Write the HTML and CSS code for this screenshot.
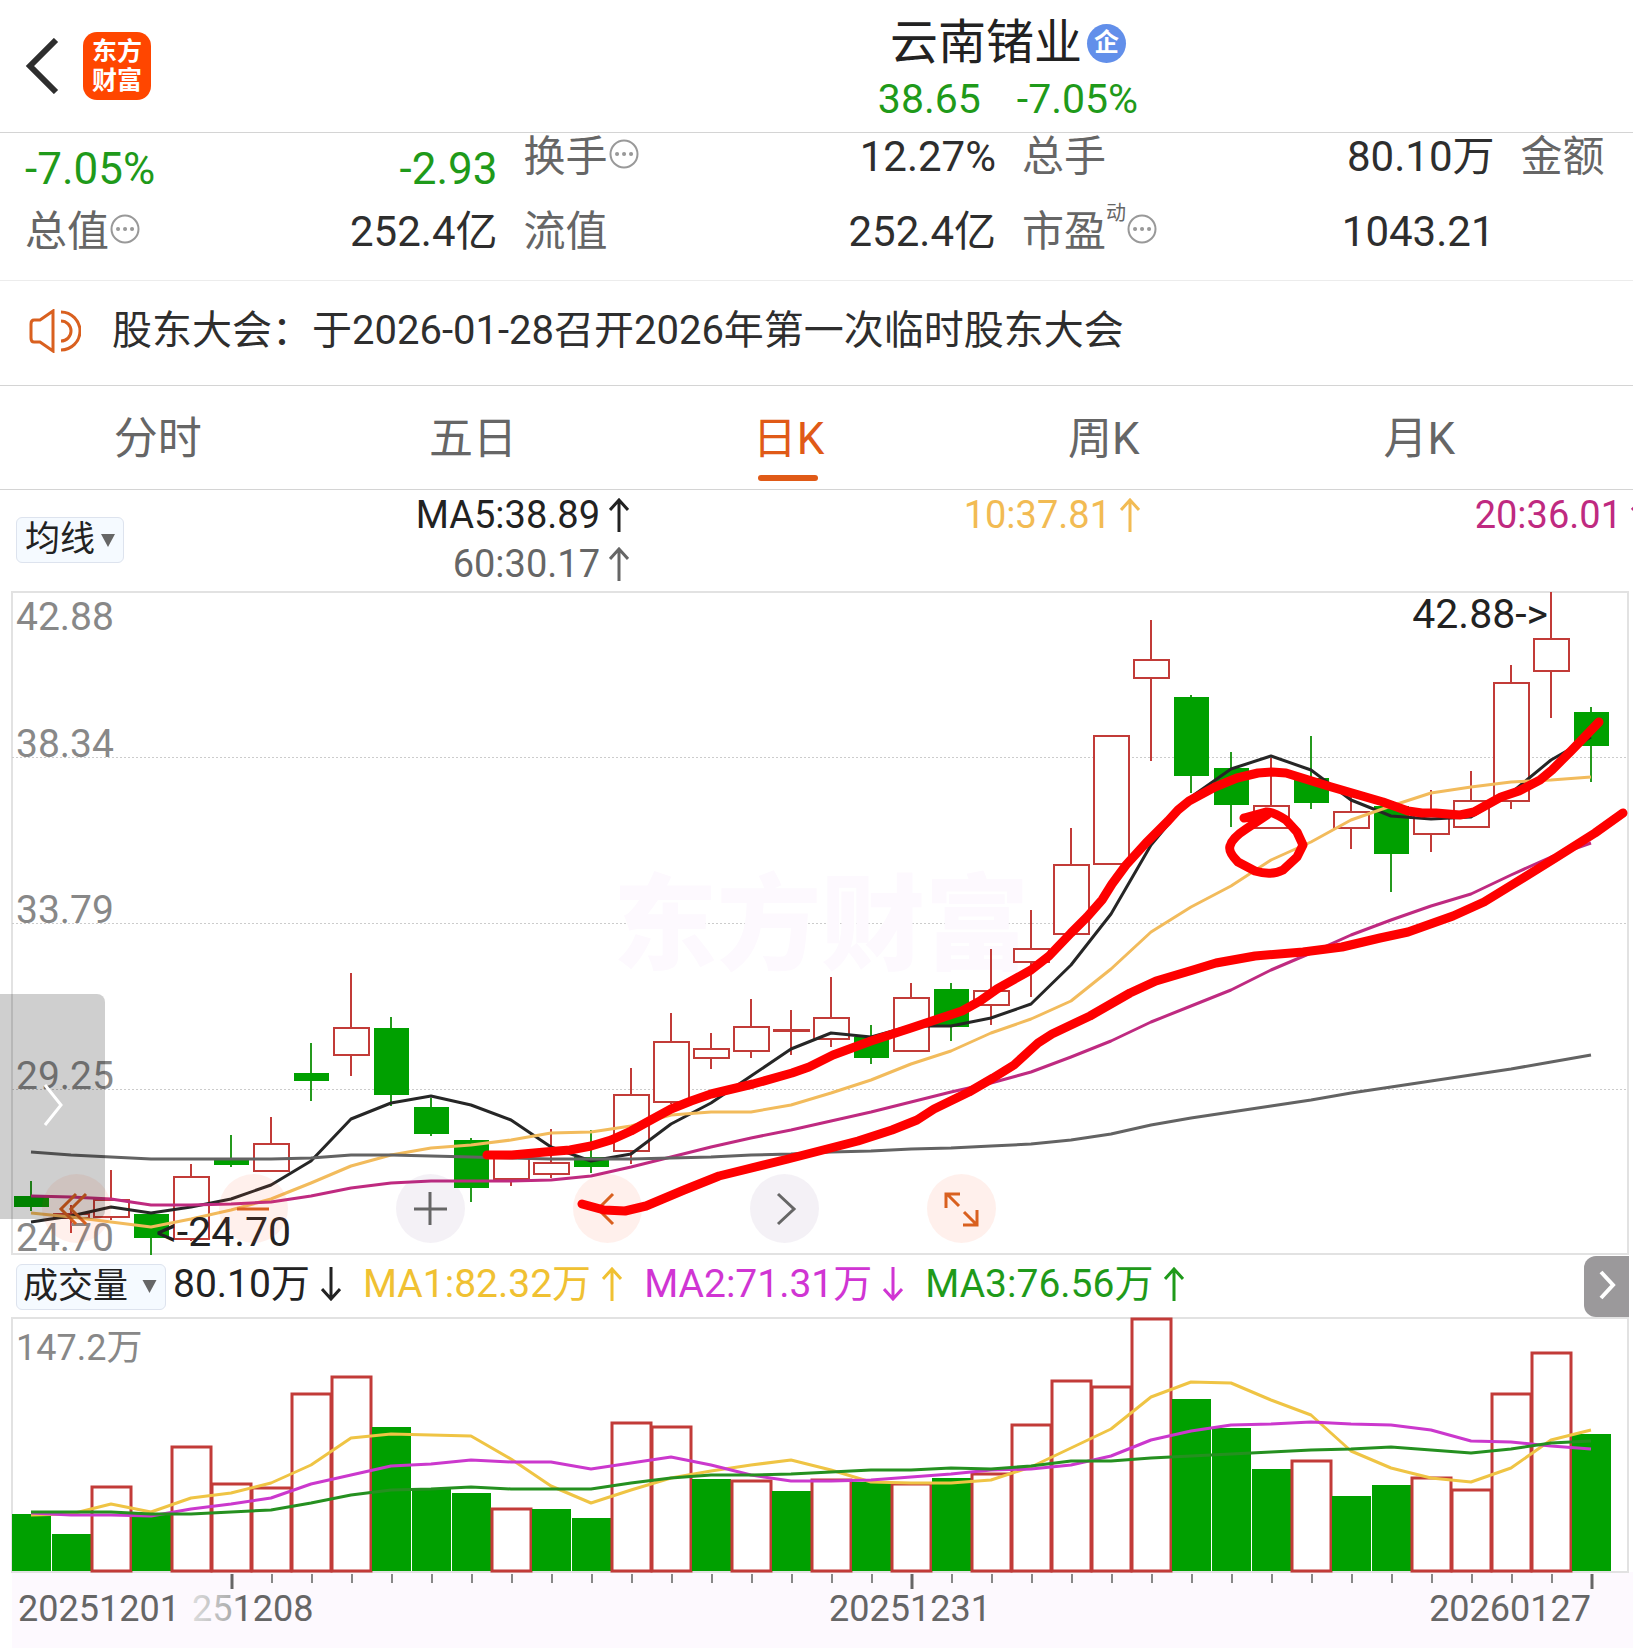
FILE: index.html
```html
<!DOCTYPE html>
<html lang="zh-CN">
<head>
    <meta charset="UTF-8">
    <meta name="viewport" content="width=device-width, initial-scale=1.0">
    <title>云南锗业 日K</title>
    <link rel="stylesheet" href="styles.css">
</head>
<body>
    <header class="topbar">
        <button class="back" type="button" aria-label="返回">
            <svg width="34" height="56" viewBox="0 0 34 56"><path d="M31 2 L5 28 L31 54"/></svg>
        </button>
        <a class="logo" href="#"><span>东方</span><span>财富</span></a>
        <div class="stock">
            <h1 class="stock-name">云南锗业<span class="badge">企</span></h1>
            <p class="stock-price"><span>38.65</span><span>-7.05%</span></p>
        </div>
    </header>

    <section class="quotes-wrap">
        <div class="quotes">
            <div class="quote change"><span>-7.05%</span><span>-2.93</span></div>
            <div class="quote"><span class="name">换手<svg class="more" viewBox="0 0 30 30"><circle cx="15" cy="15" r="13.5"/><path d="M8 15h.1M15 15h.1M22 15h.1"/></svg></span><span>12.27%</span></div>
            <div class="quote"><span class="name">总手</span><span>80.10万</span></div>
            <div class="quote"><span class="name">金额</span></div>
            <div class="quote"><span class="name">总值<svg class="more" viewBox="0 0 30 30"><circle cx="15" cy="15" r="13.5"/><path d="M8 15h.1M15 15h.1M22 15h.1"/></svg></span><span>252.4亿</span></div>
            <div class="quote"><span class="name">流值</span><span>252.4亿</span></div>
            <div class="quote"><span class="name">市盈<small>动</small><svg class="more" viewBox="0 0 30 30"><circle cx="15" cy="15" r="13.5"/><path d="M8 15h.1M15 15h.1M22 15h.1"/></svg></span><span>1043.21</span></div>
        </div>
    </section>

    <a class="notice" href="#">
        <svg width="52" height="44" viewBox="0 0 52 44"><path d="M24 2 L11 11 H5 Q2 11 2 15 V29 Q2 33 5 33 H11 L24 42 Z"/><path d="M32 12 A10 10 0 0 1 32 32"/><path d="M32 3 A19 19 0 0 1 32 41"/></svg>
        <span>股东大会：于2026-01-28召开2026年第一次临时股东大会</span>
    </a>

    <nav class="tabs">
        <button type="button">分时</button>
        <button type="button">五日</button>
        <button type="button" class="active">日K</button>
        <button type="button">周K</button>
        <button type="button">月K</button>
    </nav>

    <section class="ma-bar">
        <div class="picker">
            <select class="picker-ma" aria-label="指标"><option>均线</option></select>
            <svg width="14" height="13" viewBox="0 0 14 13"><path d="M0 0h14L7 13z"/></svg>
        </div>
        <div class="ma-values">
            <span class="ma5">MA5:38.89<svg class="arrow" viewBox="0 0 20 34"><path d="M10 34V2M1 12l9-10 9 10"/></svg></span>
            <span class="ma10">10:37.81<svg class="arrow" viewBox="0 0 20 34"><path d="M10 34V2M1 12l9-10 9 10"/></svg></span>
            <span class="ma20">20:36.01<svg class="arrow" viewBox="0 0 20 34"><path d="M10 34V2M1 12l9-10 9 10"/></svg></span>
            <span class="ma60">60:30.17<svg class="arrow" viewBox="0 0 20 34"><path d="M10 34V2M1 12l9-10 9 10"/></svg></span>
        </div>
    </section>

    <section class="kline">
        <svg id="klineChart" class="chart" viewBox="0 591 1633 665">
            <rect class="frame" x="12" y="592" width="1616" height="662"/>
            <path class="grid" d="M12 757.5H1628M12 923.5H1628M12 1089.5H1628"/>
            <text class="watermark" x="613" y="962">东方财富</text>
            <g id="candles"></g>
            <g id="klineLines"></g>
            <g class="axis">
                <text x="16" y="630">42.88</text>
                <text x="16" y="757">38.34</text>
                <text x="16" y="923">33.79</text>
                <text x="16" y="1089">29.25</text>
                <text x="16" y="1251">24.70</text>
            </g>
            <text class="peak" x="1548" y="628" text-anchor="end">42.88-&gt;</text>
            <text class="peak" x="156" y="1246">&lt;-24.70</text>
        </svg>
        <div class="controls">
            <button type="button" aria-label="最左"><svg viewBox="0 0 69 69"><path d="M34 20L19 35l15 15M44 20L29 35l15 15"/></svg></button>
            <button type="button" aria-label="缩小"><svg viewBox="0 0 69 69"><path d="M18 35h32"/></svg></button>
            <button type="button" class="gray" aria-label="放大"><svg viewBox="0 0 69 69"><path d="M18 35h33M34 18v33"/></svg></button>
            <button type="button" aria-label="左移"><svg viewBox="0 0 69 69"><path d="M40 20L25 35l15 15"/></svg></button>
            <button type="button" class="gray" aria-label="右移"><svg viewBox="0 0 69 69"><path d="M28 20l16 15-16 15"/></svg></button>
            <button type="button" aria-label="全屏"><svg viewBox="0 0 69 69"><path d="M32 32L20 20M19 34V20h14M37 38l12 12M50 36v15H36"/></svg></button>
        </div>
        <button class="drawer" type="button" aria-label="展开"><svg width="20" height="42" viewBox="0 0 20 42"><path d="M2 1l16 20L2 41"/></svg></button>
        <svg class="chart marks" viewBox="0 591 1633 665">
            <polyline points="487,1155 512,1155 545,1152 570,1150 591,1146 611,1140 631,1131 649,1121 671,1109 691,1101 711,1094 753,1084 792,1073 809,1067 833,1055 871,1041 911,1028 962,1011 980,1001 997,989 1031,970 1049,956 1071,933 1087,917 1102,900 1112,884 1126,865 1146,843 1168,821 1178,810 1189,801 1215,787 1237,778 1258,773 1272,772 1286,773 1328,786 1383,802 1408,811 1422,813 1436,813 1460,815 1474,812 1501,797 1519,791 1540,780 1552,770 1571,751 1599,722"/>
            <polyline points="582,1204 604,1210 625,1211 646,1206 684,1190 719,1176 788,1159 858,1141 892,1130 917,1120 934,1109 969,1092 993,1078 1014,1065 1038,1043 1052,1034 1090,1016 1130,993 1156,981 1193,970 1216,963 1255,956 1303,952 1342,947 1380,938 1408,932 1453,916 1484,902 1515,883 1557,857 1595,833 1623,813"/>
            <path d="M1244 818 L1266 812 Q1272 811 1286 820 L1297 832 L1303 845 L1297 857 L1283 870 Q1271 876 1255 871 L1238 862 Q1228 852 1230 846 Q1232 838 1246 829 L1267 815 L1244 818"/>
        </svg>
    </section>

    <section class="volume-bar">
        <div class="picker">
            <select class="picker-volume" aria-label="副图指标"><option>成交量</option></select>
            <svg width="15" height="13" viewBox="0 0 14 13"><path d="M0 0h14L7 13z"/></svg>
        </div>
        <div class="volume-values">
            <span class="ma5">80.10万<svg class="arrow" viewBox="0 0 20 34"><path d="M10 0v32M1 22l9 10 9-10"/></svg></span>
            <span class="vol1">MA1:82.32万<svg class="arrow" viewBox="0 0 20 34"><path d="M10 34V2M1 12l9-10 9 10"/></svg></span>
            <span class="vol2">MA2:71.31万<svg class="arrow" viewBox="0 0 20 34"><path d="M10 0v32M1 22l9 10 9-10"/></svg></span>
            <span class="vol3">MA3:76.56万<svg class="arrow" viewBox="0 0 20 34"><path d="M10 34V2M1 12l9-10 9 10"/></svg></span>
        </div>
        <button class="next" type="button" aria-label="更多"><svg width="18" height="30" viewBox="0 0 18 30"><path d="M3 2l12 13L3 28"/></svg></button>
    </section>

    <section class="volume">
        <svg id="volumeChart" class="chart" viewBox="0 1317 1633 331">
            <defs>
                <linearGradient id="fade"><stop offset="0" stop-color="#ddd"/><stop offset=".35" stop-color="#aaa"/><stop offset=".4" stop-color="#666"/></linearGradient>
            </defs>
            <rect class="dates-bg" x="12" y="1572" width="1621" height="76"/>
            <rect class="frame" x="12" y="1318" width="1616" height="254"/>
            <g id="bars"></g>
            <g id="volumeLines"></g>
            <g id="ticks"></g>
            <text class="axis small" x="16" y="1360">147.2万</text>
            <g class="dates">
                <text x="18" y="1621">20251201</text>
                <text x="192" y="1621" fill="url(#fade)">251208</text>
                <text x="829" y="1621">20251231</text>
                <text x="1591" y="1621" text-anchor="end">20260127</text>
            </g>
        </svg>
    </section>

    <script src="script.js"></script>
</body>
</html>
```
FILE: styles.css
```css
* {
    box-sizing: border-box;
}
body {
    margin: 0;
    overflow-x: hidden;
    background-color: #fff;
    color: #2e2e2e;
    font-family: Roboto, "Noto Sans CJK SC", sans-serif;
}
button, select {
    margin: 0;
    padding: 0;
    border: none;
    background: none;
    color: inherit;
    font: inherit;
}
a {
    color: inherit;
    text-decoration: none;
}
svg {
    fill: none;
}

/* Header */
.topbar {
    display: flex;
    align-items: center;
    height: 133px;
    padding-left: 25px;
    border-bottom: 1px solid #d4d4d4;
}
.back {
    width: 58px;
    height: 56px;
    text-align: left;
}
.back svg {
    display: block;
    stroke: #2e2e2e;
    stroke-width: 6;
}
.logo {
    display: flex;
    flex-direction: column;
    justify-content: center;
    align-items: center;
    width: 68px;
    height: 68px;
    border-radius: 14px;
    background-color: #ff4600;
    color: #fff;
    font-size: 25px;
    font-weight: 700;
    line-height: 29px;
}
.stock {
    flex: 1;
    padding: 10px 0 0 232px;
    text-align: center;
}
.stock-name {
    display: flex;
    justify-content: center;
    align-items: center;
    gap: 5px;
    margin: 0;
    color: #222;
    font-size: 48px;
    font-weight: 400;
    line-height: 56px;
}
.badge {
    width: 39px;
    height: 39px;
    border-radius: 50%;
    background-color: #628fea;
    color: #fff;
    font-size: 25px;
    font-weight: 700;
    line-height: 37px;
}
.stock-price {
    display: flex;
    justify-content: center;
    gap: 36px;
    margin: 0;
    color: #1f9a1a;
    font-size: 41px;
    line-height: 56px;
}

/* Quotes */
.quotes-wrap {
    overflow: hidden;
    border-bottom: 1px solid #ececec;
}
.quotes {
    display: grid;
    grid-template-columns: repeat(4, 1fr);
    grid-auto-rows: 75px;
    column-gap: 26px;
    height: 147px;
    margin-right: -360px;
    padding-left: 25px;
    font-size: 42px;
    line-height: 48px;
}
.quote {
    display: flex;
    justify-content: space-between;
    align-items: flex-start;
}
.change {
    padding-top: 12px;
    color: #1f9a1a;
    font-size: 44px;
}
.name {
    display: flex;
    color: #666;
}
.name small {
    font-size: 20px;
    line-height: 10px;
}
.more {
    width: 30px;
    height: 30px;
    margin: 6px 0 0 1px;
    stroke: #999;
    stroke-width: 2;
}
.more path {
    stroke-width: 4;
    stroke-linecap: round;
}

/* Notice */
.notice {
    display: flex;
    align-items: center;
    gap: 31px;
    height: 105px;
    padding: 0 0 4px 29px;
    border-bottom: 1px solid #d4d4d4;
    font-size: 40px;
    line-height: 48px;
    white-space: nowrap;
}
.notice svg {
    flex: none;
    stroke: #d9601f;
    stroke-width: 3;
}

/* Tabs */
.tabs {
    display: grid;
    grid-template-columns: repeat(5, 1fr);
    height: 104px;
    padding-right: 56px;
    border-bottom: 1px solid #d4d4d4;
    color: #666;
    font-size: 44px;
}
.tabs button {
    display: flex;
    flex-direction: column;
    align-items: center;
    padding-top: 21px;
    line-height: 64px;
}
.tabs .active {
    color: #e05a17;
}
.tabs .active::after {
    content: "";
    width: 60px;
    height: 6px;
    margin-top: 4px;
    border-radius: 3px;
    background-color: #e05a17;
}

/* Moving averages */
.ma-bar {
    display: flex;
    height: 101px;
    padding-left: 16px;
    overflow: hidden;
}
.picker {
    display: flex;
    flex: none;
    align-items: center;
    height: 46px;
    padding: 0 8px;
    border: 1px solid #dde3ee;
    border-radius: 6px;
    background-color: #f5faff;
    color: #222;
    font-size: 35px;
}
.picker select {
    appearance: none;
    height: 44px;
    line-height: 44px;
}
.picker svg {
    fill: #666;
}
.picker-ma {
    width: 76px;
}
.picker-volume {
    width: 119px;
}
.ma-bar .picker {
    margin-top: 27px;
}
.ma-values {
    display: grid;
    flex: 1;
    grid-template-columns: repeat(3, 1fr);
    grid-auto-rows: 49px;
    margin: 0 -18px 0 -6px;
    font-size: 38px;
}
.ma-values span {
    display: flex;
    justify-content: flex-end;
    align-items: center;
    gap: 9px;
}
.arrow {
    width: 20px;
    height: 34px;
    stroke: currentColor;
    stroke-width: 3;
}
.ma5 {
    color: #222;
}
.ma10 {
    color: #f2bb53;
}
.ma20 {
    color: #bf2a80;
}
.ma60 {
    color: #666;
}

/* Charts */
.kline {
    position: relative;
}
.chart {
    display: block;
    width: 100%;
}
.frame {
    stroke: #e2e2e2;
    stroke-width: 2;
}
.grid {
    stroke: #ccc;
    stroke-dasharray: 2 2;
}
.watermark {
    fill: #fdf9fe;
    font-size: 104px;
    font-weight: 900;
}
.axis {
    fill: #888;
    font-size: 39px;
}
.small {
    font-size: 36px;
}
.peak {
    fill: #222;
    font-size: 41px;
}
.up {
    fill: #fff;
    stroke: #c23b38;
    stroke-width: 2;
}
.down {
    fill: #00a000;
}
.wick-up {
    stroke: #c23b38;
    stroke-width: 2;
}
.wick-down {
    stroke: #259a1e;
    stroke-width: 2;
}
#bars .up {
    stroke-width: 3;
}
.line {
    stroke-width: 3;
    stroke-linejoin: round;
}
.marks {
    position: absolute;
    top: 0;
    left: 0;
    pointer-events: none;
    stroke: #fe0000;
    stroke-width: 9;
    stroke-linecap: round;
    stroke-linejoin: round;
}
.controls {
    position: absolute;
    bottom: 13px;
    left: 42px;
    display: flex;
    gap: 108px;
}
.controls button {
    width: 69px;
    height: 69px;
    border-radius: 50%;
    background-color: rgba(255, 90, 40, 0.09);
}
.controls .gray {
    background-color: rgba(100, 50, 130, 0.07);
}
.controls svg {
    display: block;
    stroke: #d9601f;
    stroke-width: 3;
}
.controls .gray svg {
    stroke: #666;
}
.drawer {
    position: absolute;
    top: 403px;
    left: 0;
    width: 105px;
    height: 225px;
    border-radius: 0 8px 8px 0;
    background-color: rgba(0, 0, 0, 0.19);
}
.drawer svg {
    stroke: #fff;
    stroke-width: 3;
}

/* Volume */
.volume-bar {
    display: flex;
    align-items: center;
    height: 61px;
    padding: 0 4px 0 16px;
}
.volume-bar .picker {
    padding: 0 8px 0 6px;
}
.volume-values {
    display: flex;
    gap: 22px;
    flex: 1;
    padding: 0 0 6px 7px;
    font-size: 39px;
    line-height: 46px;
    white-space: nowrap;
}
.volume-values span {
    display: flex;
    align-items: center;
    gap: 11px;
}
.vol1 {
    color: #f0c132;
}
.vol2 {
    color: #d035d3;
}
.vol3 {
    color: #1f9a1a;
}
.next {
    width: 45px;
    height: 61px;
    border-radius: 12px 0 0 12px;
    background-color: #9b999b;
}
.next svg {
    stroke: #fff;
    stroke-width: 4;
}
.dates-bg {
    fill: #fdf9fe;
}
.dates {
    fill: #666;
    font-size: 36px;
}
.tick {
    stroke: #888;
    stroke-width: 2;
}
.tick-long {
    stroke: #666;
    stroke-width: 3;
}
```
FILE: script.js
```js
// [up, high, top, bottom, low]
const candles = [
    [0, 1181, 1196, 1207, 1211], [1, 1205, 1214, 1218, 1233], [1, 1170, 1200, 1217, 1220], [0, 1213, 1214, 1238, 1255],
    [1, 1164, 1177, 1239, 1241], [0, 1135, 1160, 1165, 1167], [1, 1117, 1144, 1171, 1171], [0, 1043, 1073, 1081, 1101],
    [1, 973, 1028, 1055, 1076], [0, 1017, 1028, 1095, 1106], [0, 1098, 1107, 1134, 1136], [0, 1138, 1140, 1188, 1202],
    [1, 1151, 1155, 1179, 1186], [1, 1129, 1163, 1174, 1178], [0, 1130, 1157, 1167, 1173], [1, 1068, 1095, 1151, 1164],
    [1, 1013, 1042, 1102, 1104], [1, 1033, 1049, 1058, 1069], [1, 999, 1027, 1051, 1058], [1, 1010, 1030, 1031, 1055],
    [1, 977, 1018, 1039, 1047], [0, 1025, 1037, 1058, 1064], [1, 983, 998, 1051, 1051], [0, 983, 989, 1027, 1041],
    [1, 949, 991, 1005, 1025], [1, 910, 949, 962, 997], [1, 828, 865, 934, 934], [1, 736, 736, 864, 864],
    [1, 620, 660, 678, 761], [0, 695, 697, 776, 793], [0, 752, 768, 805, 827], [1, 758, 806, 828, 828],
    [0, 736, 778, 803, 809], [1, 797, 812, 828, 849], [0, 806, 806, 854, 892], [1, 790, 815, 834, 852],
    [1, 771, 801, 827, 828], [1, 665, 683, 801, 809], [1, 592, 639, 671, 718], [0, 707, 712, 746, 782]
];

const klineLines = {
    "#262626": [1222, 1216, 1207, 1213, 1207, 1199, 1185, 1161, 1119, 1103, 1096, 1105, 1120, 1147, 1161, 1154, 1124, 1103, 1076, 1049, 1033, 1037, 1026, 1026, 1018, 1004, 965, 914, 845, 797, 769, 756, 770, 800, 816, 819, 817, 793, 760, 737],
    "#f2bb5c": [1213, 1217, 1222, 1227, 1219, 1210, 1199, 1183, 1166, 1155, 1148, 1145, 1140, 1133, 1132, 1126, 1115, 1112, 1112, 1105, 1093, 1080, 1064, 1051, 1033, 1019, 1001, 969, 932, 907, 886, 860, 842, 820, 806, 793, 787, 782, 780, 777],
    "#bf2a80": [1196, 1197, 1199, 1205, 1205, 1204, 1202, 1196, 1188, 1183, 1181, 1181, 1181, 1180, 1176, 1167, 1157, 1147, 1138, 1130, 1121, 1112, 1102, 1092, 1083, 1072, 1057, 1041, 1022, 1006, 990, 970, 953, 935, 920, 906, 894, 875, 857, 843],
    "#636363": [1152, 1155, 1157, 1159, 1159, 1159, 1159, 1158, 1155, 1155, 1156, 1157, 1158, 1159, 1159, 1159, 1158, 1157, 1155, 1154, 1152, 1151, 1149, 1148, 1146, 1144, 1140, 1134, 1125, 1118, 1112, 1106, 1100, 1093, 1087, 1081, 1075, 1069, 1062, 1055]
};

// [up, top]
const volumes = [
    [0, 1514], [0, 1534], [1, 1487], [0, 1514], [1, 1447], [1, 1484], [1, 1488], [1, 1394], [1, 1377], [0, 1427],
    [0, 1488], [0, 1493], [1, 1509], [0, 1509], [0, 1518], [1, 1423], [1, 1427], [0, 1479], [1, 1481], [0, 1491],
    [1, 1480], [0, 1482], [1, 1484], [0, 1478], [1, 1474], [1, 1425], [1, 1381], [1, 1387], [1, 1319], [0, 1399],
    [0, 1428], [0, 1469], [1, 1461], [0, 1496], [0, 1485], [1, 1478], [1, 1490], [1, 1394], [1, 1353], [0, 1434]
];

const volumeLines = {
    "#efc444": [1515, 1514, 1504, 1512, 1498, 1493, 1483, 1465, 1438, 1434, 1435, 1436, 1459, 1486, 1503, 1490, 1478, 1471, 1465, 1460, 1470, 1482, 1483, 1483, 1480, 1467, 1448, 1429, 1397, 1382, 1383, 1400, 1415, 1451, 1468, 1478, 1482, 1468, 1440, 1430],
    "#cb38cd": [1513, 1515, 1515, 1516, 1509, 1504, 1498, 1484, 1475, 1466, 1464, 1460, 1462, 1462, 1469, 1463, 1457, 1465, 1475, 1481, 1481, 1480, 1477, 1474, 1470, 1469, 1465, 1456, 1440, 1431, 1425, 1424, 1422, 1424, 1425, 1430, 1441, 1442, 1446, 1449],
    "#259020": [1512, 1512, 1512, 1514, 1514, 1512, 1510, 1503, 1495, 1490, 1489, 1487, 1489, 1489, 1489, 1483, 1478, 1475, 1475, 1474, 1472, 1470, 1470, 1468, 1469, 1466, 1461, 1461, 1458, 1456, 1454, 1452, 1450, 1449, 1447, 1450, 1453, 1449, 1443, 1441]
};

const step = 40;
const first = 31;

function add(parentId, tag, attrs) {
    const el = document.createElementNS("http://www.w3.org/2000/svg", tag);
    Object.keys(attrs).forEach(key => el.setAttribute(key, attrs[key]));
    document.getElementById(parentId).appendChild(el);
}

function drawLines(parentId, lines) {
    Object.keys(lines).forEach(color => {
        const points = lines[color].map((y, i) => `${first + i * step},${y}`).join(" ");
        add(parentId, "polyline", { class: "line", stroke: color, points: points });
    });
}

candles.forEach(([up, high, top, bottom, low], i) => {
    const x = first + i * step;
    add("candles", "path", { class: up ? "wick-up" : "wick-down", d: `M${x} ${high}V${low}` });
    add("candles", "rect", {
        class: up ? "up" : "down",
        x: x - 17,
        y: top,
        width: 35,
        height: bottom - top
    });
});

volumes.forEach(([up, top], i) => {
    const x = first + i * step;
    add("bars", "rect", {
        class: up ? "up" : "down",
        x: x - 19,
        y: top,
        width: 39,
        height: 1571 - top
    });
    if (i > 4) {
        const long = i === 5 || i === 22 || i === 39;
        add("ticks", "path", { class: long ? "tick-long" : "tick", d: `M${x + 1} 1574V${long ? 1589 : 1583}` });
    }
});

drawLines("klineLines", klineLines);
drawLines("volumeLines", volumeLines);
```
